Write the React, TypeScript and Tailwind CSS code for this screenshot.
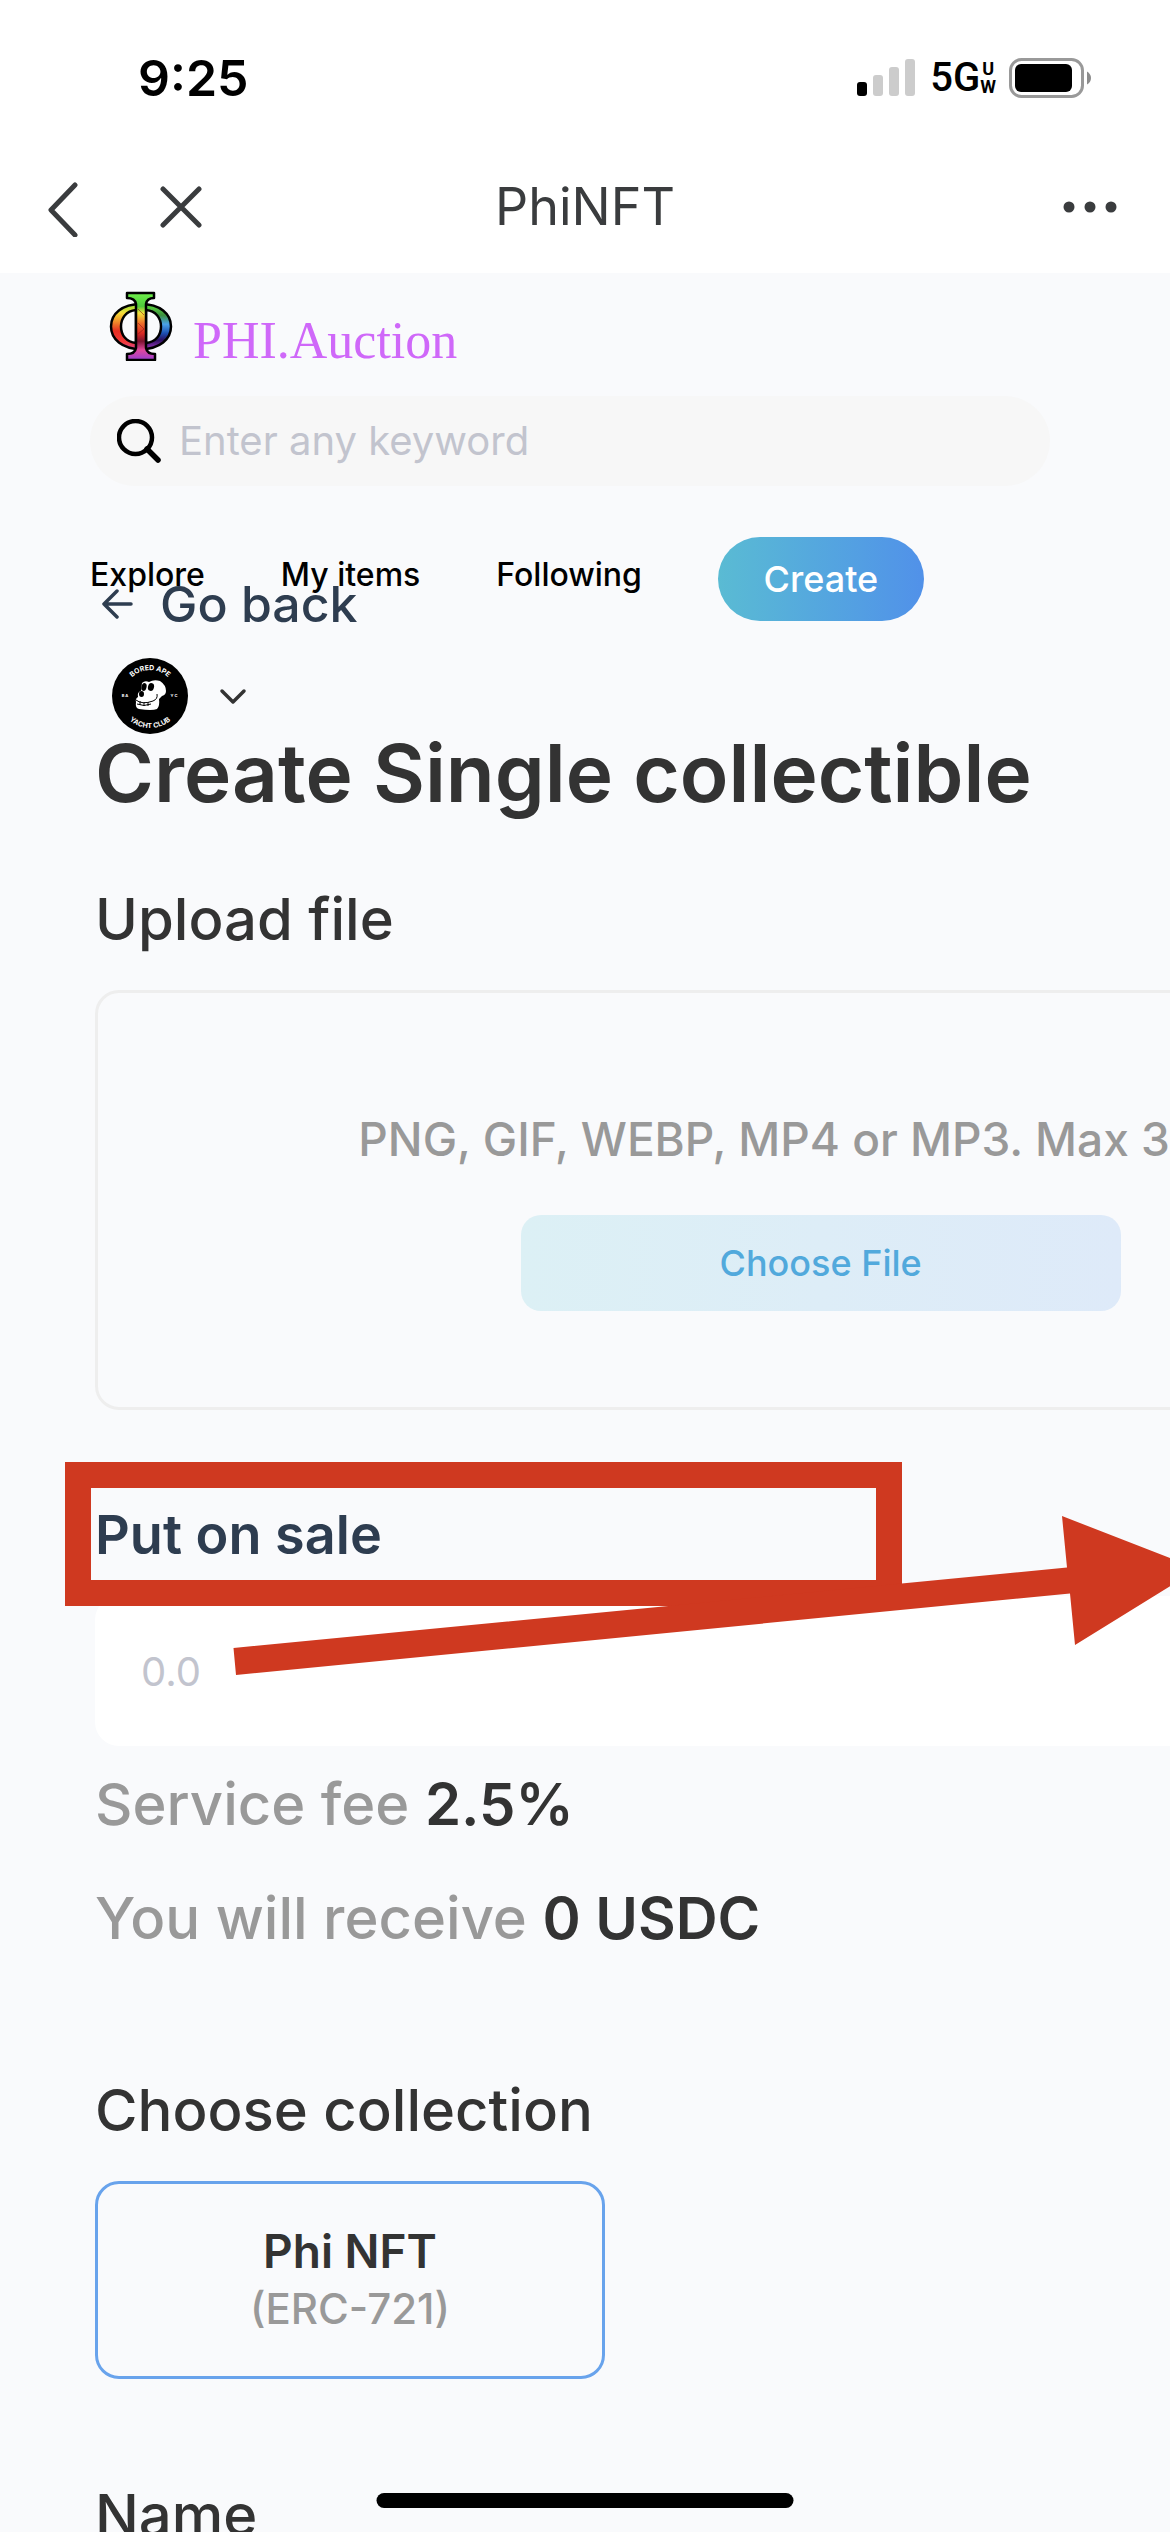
import React from "react";

function StatusBar() {
  return (
    <div className="flex h-[156px] items-center justify-between pr-[78px] pl-[138px]">
      <span className="text-[50px] leading-[60px] font-semibold text-black">9:25</span>
      <div className="flex items-center gap-[13px]">
        <svg width="60" height="38" viewBox="0 0 60 38" aria-label="Signal strength">
          <rect x="0" y="23" width="10" height="14" rx="3" fill="#000" />
          <rect x="16" y="16" width="10" height="21" rx="3" fill="#ccc" />
          <rect x="32" y="8" width="10" height="29" rx="3" fill="#ccc" />
          <rect x="48" y="0" width="10" height="37" rx="3" fill="#ccc" />
        </svg>
        <div className="flex items-center font-[Roboto,sans-serif] font-medium text-black">
          <span className="text-[40px] leading-[40px]">5G</span>
          <span className="flex flex-col items-center text-[18px] leading-[18px] font-bold">
            <span>U</span>
            <span>W</span>
          </span>
        </div>
        <svg width="83" height="40" viewBox="0 0 83 40" aria-label="Battery">
          <rect x="1.5" y="1.5" width="72" height="37" rx="11" fill="none" stroke="#999" strokeWidth="3" />
          <rect x="6" y="6" width="57" height="28" rx="6" fill="#000" />
          <path d="M78 13.500 Q82 16 82 20 Q82 24 78 26.500 Z" fill="#8c8c8c" />
        </svg>
      </div>
    </div>
  );
}

function TitleBar() {
  return (
    <div className="grid h-[117px] grid-cols-3 items-center px-[46px] pb-[15px] text-[#3a3c3e]">
      <div className="flex items-center gap-[80px]">
        <button type="button" aria-label="Back">
          <svg width="34" height="60" viewBox="0 0 34 60" fill="none" stroke="currentColor" strokeWidth="5" strokeLinecap="round" strokeLinejoin="round">
            <path d="M29 8 L5 33 L29 58" />
          </svg>
        </button>
        <button type="button" aria-label="Close">
          <svg width="42" height="42" viewBox="0 0 42 42" fill="none" stroke="currentColor" strokeWidth="5" strokeLinecap="round">
            <path d="M3 3 L39 39 M39 3 L3 39" />
          </svg>
        </button>
      </div>
      <h1 className="text-center text-[52px] leading-[60px]">PhiNFT</h1>
      <button type="button" aria-label="More" className="justify-self-end pr-[6px]">
        <svg width="56" height="12" viewBox="0 0 56 12" fill="currentColor">
          <circle cx="7" cy="6" r="5.500" />
          <circle cx="28" cy="6" r="5.500" />
          <circle cx="49" cy="6" r="5.500" />
        </svg>
      </button>
    </div>
  );
}

function PhiLogo() {
  return (
    <svg width="64" height="70" viewBox="0 0 64 70" aria-hidden="true">
      <defs>
        <linearGradient id="phiStem" x1="0" y1="0" x2="0" y2="1">
          <stop offset="0" stopColor="#6ff04a" />
          <stop offset=".2" stopColor="#4fc93c" />
          <stop offset=".3" stopColor="#f2e23a" />
          <stop offset=".45" stopColor="#f0702a" />
          <stop offset=".6" stopColor="#d92a24" />
          <stop offset=".72" stopColor="#7d1230" />
          <stop offset=".85" stopColor="#e0489c" />
          <stop offset="1" stopColor="#9b3fd0" />
        </linearGradient>
        <linearGradient id="phiLeft" x1="0" y1="0" x2="0" y2="1">
          <stop offset="0" stopColor="#8fe03c" />
          <stop offset=".2" stopColor="#f5dd38" />
          <stop offset=".4" stopColor="#f08a2a" />
          <stop offset=".6" stopColor="#e52e22" />
          <stop offset=".85" stopColor="#f03a3a" />
          <stop offset="1" stopColor="#d84590" />
        </linearGradient>
        <linearGradient id="phiRight" x1="0" y1="0" x2="0" y2="1">
          <stop offset="0" stopColor="#5fe03c" />
          <stop offset=".25" stopColor="#3c8f3e" />
          <stop offset=".45" stopColor="#4aa3e8" />
          <stop offset=".65" stopColor="#1c4fb0" />
          <stop offset=".8" stopColor="#2a1060" />
          <stop offset="1" stopColor="#a03ac0" />
        </linearGradient>
      </defs>
      <g stroke="#000" strokeWidth="2.500" strokeLinejoin="round" fillRule="evenodd">
        <path d="M32 13 C13 13 2 23 2 35.500 C2 48 13 58 32 58 Z M27 19 C17 20 12 27 12 35.500 C12 44 17 51 27 52 Z" fill="url(#phiLeft)" />
        <path d="M32 13 C51 13 62 23 62 35.500 C62 48 51 58 32 58 Z M37 19 C47 20 52 27 52 35.500 C52 44 47 51 37 52 Z" fill="url(#phiRight)" />
        <path d="M18 2 H45 V7 Q38 7 37 13 V57 Q38 63 46 63 V69 H18 V63 Q26 63 27 57 V13 Q26 7 18 7 Z" fill="url(#phiStem)" />
      </g>
      <path d="M29 18 L35 24 M29 32 L35 38 L29 43" stroke="#8a1a1a" strokeWidth="1" fill="none" opacity=".6" />
    </svg>
  );
}

function Avatar() {
  return (
    <svg width="76" height="76" viewBox="0 0 76 76" aria-label="Bored Ape Yacht Club">
      <circle cx="38" cy="38" r="38" fill="#000" />
      <defs>
        <path id="arcTop" d="M12 38 A26 26 0 0 1 64 38" />
        <path id="arcBottom" d="M6 38 A32 32 0 0 0 70 38" />
      </defs>
      <g fill="#fff" fontFamily="Inter, sans-serif" fontWeight="700" textAnchor="middle">
        <text fontSize="7">
          <textPath href="#arcTop" startOffset="50%">BORED APE</textPath>
        </text>
        <text fontSize="7">
          <textPath href="#arcBottom" startOffset="50%">YACHT CLUB</textPath>
        </text>
        <text x="13" y="39" fontSize="4">B A</text>
        <text x="62" y="39" fontSize="4">Y C</text>
      </g>
      <path d="M30 25 Q33 22 37 24 Q42 21 48 23 Q54 27 54 33 Q54 37 50 38 L47 41 Q48 48 45 51 Q40 53 27 51 Q23 50 24 44 Q23 41 26 39 Q25 34 29 33 Z" fill="#fff" />
      <ellipse cx="32" cy="29" rx="2.500" ry="4" fill="#000" transform="rotate(15 32 29)" />
      <ellipse cx="39" cy="29" rx="3" ry="4" fill="#000" transform="rotate(15 39 29)" />
      <ellipse cx="29.500" cy="36" rx="2.500" ry="3" fill="#000" />
      <path d="M24 42 Q30 47 41 43 M25 46 Q32 49 39 46 M28 43 V47 M32 44 V48 M36 44 V48 M41 43 Q46 41 45 36" stroke="#000" strokeWidth="1" fill="none" />
    </svg>
  );
}

function SiteHeader() {
  return (
    <header className="absolute inset-x-0 top-0 z-10 px-[90px] pt-[18px]">
      <a href="#home" className="flex w-fit items-start pl-[19px]">
        <PhiLogo />
        <span className="pt-[20px] pl-[20px] font-['Liberation_Serif',serif] text-[52px] leading-[60px] text-[#cf68f9]">
          PHI.Auction
        </span>
      </a>
      <label className="mt-[25px] mr-[30px] flex h-[90px] items-center gap-[18px] rounded-full bg-[#f7f7f7] pl-[27px]">
        <svg width="44" height="44" viewBox="0 0 44 44" fill="none" stroke="#000" strokeWidth="4.500" aria-hidden="true">
          <circle cx="18.500" cy="18.500" r="16.500" />
          <path d="M30 30 L41 41" strokeWidth="5.500" strokeLinecap="round" />
        </svg>
        <input
          type="text"
          aria-label="Search"
          placeholder="Enter any keyword"
          className="min-w-0 flex-1 bg-transparent text-[40px] leading-[48px] outline-none placeholder:text-[#c2c4ce]"
        />
      </label>
      <nav className="mt-[51px] flex items-center gap-[76px] text-[32px] leading-[36px] font-medium text-black">
        <a href="#explore" className="pb-[9px]">Explore</a>
        <a href="#items" className="pb-[9px]">My items</a>
        <a href="#following" className="pb-[9px]">Following</a>
        <button
          type="button"
          className="h-[84px] w-[206px] rounded-full bg-linear-to-r from-[#5abbd3] to-[#5191e9] text-[36px] leading-[44px] font-medium text-white"
        >
          Create
        </button>
      </nav>
      <button type="button" aria-label="Account menu" className="mt-[37px] ml-[22px] flex items-center gap-[30px]">
        <Avatar />
        <svg width="30" height="20" viewBox="0 0 30 20" fill="none" stroke="#333" strokeWidth="3.500" strokeLinecap="round" strokeLinejoin="round">
          <path d="M4 5 L15 16 L26 5" />
        </svg>
      </button>
    </header>
  );
}

function SaleHighlight() {
  return (
    <>
      <div className="pointer-events-none absolute -top-[41px] -left-[30px] z-20 h-[144px] w-[837px] border-[26px] border-[#cf3920]" />
      <svg
        className="pointer-events-none absolute top-[13px] left-[138px] z-20"
        width="966"
        height="160"
        viewBox="0 0 966 160"
        aria-hidden="true"
      >
        <path d="M0.500 132 L834 51.500 L829 0 L965 53 L842 129 L837 77.500 L3 159 Z" fill="#cf3920" />
      </svg>
    </>
  );
}

function CreateForm() {
  return (
    <main className="pt-[303px] pl-[95px] text-[58px] leading-[64px] font-medium text-[#333]">
      <a href="#back" className="flex w-fit items-center gap-[27px] pl-[7px] text-[50px] leading-[56px] text-[#2e3d50]">
        <svg width="31" height="30" viewBox="0 0 31 30" fill="none" stroke="currentColor" strokeWidth="3.500" strokeLinecap="round" strokeLinejoin="round" aria-hidden="true">
          <path d="M29 15 H2 M15 2 L2 15 L15 28" />
        </svg>
        Go back
      </a>
      <h2 className="mt-[97px] text-[80px] leading-[88px] font-semibold whitespace-nowrap">Create Single collectible</h2>

      <h3 className="mt-[70px]">Upload file</h3>
      <section className="mt-[39px] flex w-[135%] flex-col items-center rounded-[24px] border-[3px] border-[#eee] pt-[122px] pb-[96px]">
        <p className="text-[46px] leading-[48px] whitespace-nowrap text-[#999]">PNG, GIF, WEBP, MP4 or MP3. Max 30mb.</p>
        <button
          type="button"
          className="mt-[52px] h-[96px] w-[600px] rounded-[20px] bg-linear-to-r from-[#dcf0f5] to-[#deeaf9] text-[36px] leading-[44px] font-medium text-[#51a9dc]"
        >
          Choose File
        </button>
      </section>

      <div className="relative mt-[93px]">
        <label htmlFor="price" className="block text-[54px] leading-[64px] font-semibold text-[#2e3d50]">Put on sale</label>
        <SaleHighlight />
      </div>
      <input
        id="price"
        type="text"
        placeholder="0.0"
        className="mt-[29px] block h-[150px] w-[135%] rounded-[24px] bg-white px-[46px] text-[40px] leading-[48px] font-normal outline-none placeholder:text-[#c2c4ce]"
      />

      <p className="mt-[26px] text-[#999]">
        Service fee <strong className="font-semibold text-[#333]">2.5%</strong>
      </p>
      <p className="mt-[50px] text-[#999]">
        You will receive <strong className="font-semibold text-[#333]">0 USDC</strong>
      </p>

      <h3 className="mt-[128px]">Choose collection</h3>
      <button
        type="button"
        className="mt-[39px] flex h-[198px] w-[510px] flex-col items-center justify-center rounded-[24px] border-[3px] border-[#68a3ec] leading-[57px]"
      >
        <span className="text-[46px] font-semibold">Phi NFT</span>
        <span className="text-[42px] text-[#999]">(ERC-721)</span>
      </button>

      <h3 className="mt-[104px]">Name</h3>
    </main>
  );
}

export default function App() {
  return (
    <div className="relative h-screen overflow-hidden bg-[#f9fafc] font-[Inter,sans-serif]">
      <div className="bg-white">
        <StatusBar />
        <TitleBar />
      </div>
      <div className="relative">
        <SiteHeader />
        <CreateForm />
      </div>
      <div className="absolute bottom-[24px] left-1/2 z-30 h-[15px] w-[417px] -translate-x-1/2 rounded-full bg-black" />
    </div>
  );
}
